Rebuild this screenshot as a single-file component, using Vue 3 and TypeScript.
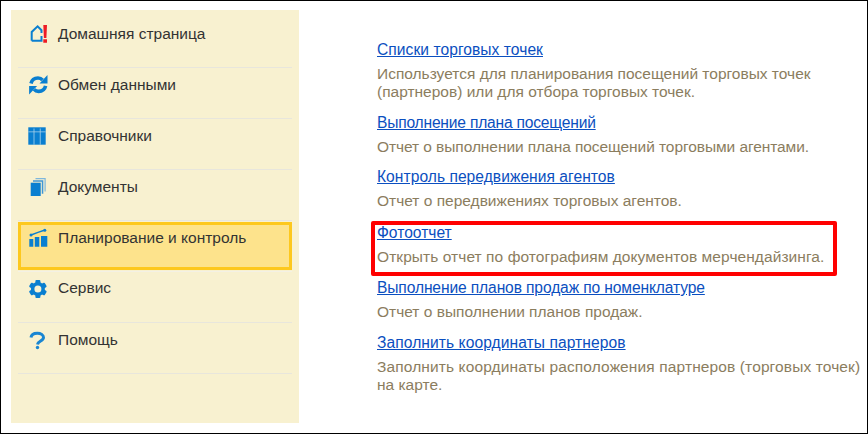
<script setup lang="ts">
interface Line { text: string; track?: number }
interface Entry { title: Line; lines: Line[]; highlighted?: boolean }
const menu = ['Домашняя страница', 'Обмен данными', 'Справочники', 'Документы', 'Планирование и контроль', 'Сервис', 'Помощь']
const entries: Entry[] = [
  { title: { text: 'Списки торговых точек', track: 0.05 }, lines: [{ text: 'Используется для планирования посещений торговых точек' }, { text: '(партнеров) или для отбора торговых точек.' }] },
  { title: { text: 'Выполнение плана посещений', track: -0.2 }, lines: [{ text: 'Отчет о выполнении плана посещений торговыми агентами.', track: -0.07 }] },
  { title: { text: 'Контроль передвижения агентов', track: 0.04 }, lines: [{ text: 'Отчет о передвижениях торговых агентов.' }] },
  { title: { text: 'Фотоотчет' }, lines: [{ text: 'Открыть отчет по фотографиям документов мерчендайзинга.', track: 0.07 }], highlighted: true },
  { title: { text: 'Выполнение планов продаж по номенклатуре', track: -0.12 }, lines: [{ text: 'Отчет о выполнении планов продаж.' }] },
  { title: { text: 'Заполнить координаты партнеров', track: 0.07 }, lines: [{ text: 'Заполнить координаты расположения партнеров (торговых точек)', track: 0.12 }, { text: 'на карте.' }] }
]
const spacing = (l: Line) => (l.track ? { letterSpacing: `${l.track}px` } : undefined)
</script>

<template>
  <div class="frame">
    <aside class="panel">
      <div v-for="(label, i) in menu" :key="label" class="row" :class="{ active: i === 4 }">
        <svg class="icon" width="22" height="24" viewBox="0 0 22 24">
          <g v-if="i === 0">
            <path d="M4.700 17.700V9L10.600 3.300 14.500 7.200V10M14.500 13V17.700H4.700" fill="none" stroke="#0a7fd0" stroke-width="2" />
            <path d="M16.300 2H20L19.400 15H16.900ZM16.300 16.300H20V19.700H16.300Z" fill="#ee1c25" />
          </g>
          <g v-else-if="i === 1">
            <path d="M4 8.500C4.800 5 7.500 3 11 3c2 0 3.500.8 4.500 2M18.600 10.900C17.800 14.400 15.100 16.400 11.600 16.400c-2 0-3.500-.8-4.500-2" fill="none" stroke="#0a7fd0" stroke-width="3.600" />
            <path d="M20.500 0V8.500H12.500ZM2.100 19.400V10.900H10.100Z" fill="#0a7fd0" />
          </g>
          <g v-else-if="i === 2">
            <path d="M1.300 1.300H18.700V18.700H1.300Z" fill="#0a7fd0" />
            <path d="M1.300 5.400H18.700V6.200H1.300ZM6.600 2.500H7.400V18.700H6.600ZM12.800 2.500H13.600V18.700H12.800Z" fill="#a9d2ea" />
          </g>
          <g v-else-if="i === 3">
            <path d="M8.500 1H18.700V14.500H17.500V2.200H8.500Z" fill="#7fb7dc" />
            <path d="M6 3.300H16.300V16.800H14.800V4.800H6Z" fill="#3f96d6" />
            <path d="M3.700 5.700H13.700V19H3.700Z" fill="#0a7fd0" />
          </g>
          <g v-else-if="i === 4">
            <path d="M2.300 11H6.300V18.700H2.300ZM7.800 9H12.300V18.700H7.800ZM14 8H20.300V18.700H14Z" fill="#0a7fd0" />
            <path d="M4 7L11 4.300 18 2" fill="none" stroke="#0a7fd0" stroke-width="1.400" />
            <circle cx="4" cy="7" r="1.500" fill="#0a7fd0" />
            <circle cx="17.800" cy="2.200" r="1.500" fill="#0a7fd0" />
          </g>
          <g v-else-if="i === 5" fill="#0a7fd0">
            <rect x="8.400" y="2" width="5" height="18" rx="1" />
            <rect x="8.400" y="2" width="5" height="18" rx="1" transform="rotate(60 10.900 11)" />
            <rect x="8.400" y="2" width="5" height="18" rx="1" transform="rotate(120 10.900 11)" />
            <circle cx="10.900" cy="11" r="7" />
            <circle cx="10.900" cy="11" r="3.500" fill="#f8f1d0" />
          </g>
          <g v-else>
            <path d="M4 8.500C4.300 5.500 7 4.200 10.300 4.200 13.800 4.200 16.500 6 16.500 8.500 16.500 12 11 12 10.500 15.500" fill="none" stroke="#1a86d2" stroke-width="3" />
            <circle cx="10.500" cy="18.500" r="1.700" fill="#1a86d2" />
          </g>
        </svg>
        <span class="label">{{ label }}</span>
      </div>
    </aside>
    <main class="content">
      <section v-for="e in entries" :key="e.title.text" class="entry" :class="{ marked: e.highlighted }">
        <a class="link" href="#" :style="spacing(e.title)">{{ e.title.text }}</a>
        <p v-for="l in e.lines" :key="l.text" class="desc" :style="spacing(l)">{{ l.text }}</p>
      </section>
    </main>
  </div>
</template>

<style>
html, body { margin: 0; background: #fff; }
</style>

<style scoped>
.frame {
  width: 868px;
  height: 434px;
  box-sizing: border-box;
  border: 1px solid #000;
  background: #fff;
  display: flex;
  align-items: flex-start;
  padding: 9px 0 0 10px;
  font-family: "Liberation Sans", Arial, sans-serif;
  overflow: hidden;
}
.panel {
  width: 288px;
  height: 413px;
  flex: none;
  box-sizing: border-box;
  background: #f8f1d0;
  padding: 7px 7px 0;
}
.row {
  height: 51px;
  box-sizing: border-box;
  border-bottom: 1px solid #e8e6dc;
  display: flex;
  align-items: flex-start;
  padding: 6px 0 0 9px;
  color: #333;
  font-size: 15.500px;
}
.row:first-child .icon, .row:last-child .icon { margin-top: 0; }
.row.active {
  height: 48px;
  margin-top: 1px;
  padding: 2px 0 0 6px;
  background: #fde38c;
  border: 3px solid #fdc81e;
}
.row.active + .row {
  margin-top: 1px;
  border-top: 1px solid #f4f1e4;
  height: 52px;
  padding-top: 5px;
}
.icon { flex: none; margin: 1px 9px 0 0; }
.label { line-height: 22px; }
.content {
  margin-left: 78px;
  padding-top: 31px;
  display: flex;
  flex-direction: column;
  gap: 12.500px;
  width: 490px;
  white-space: nowrap;
}
.entry { position: relative; }
.entry.marked { margin: 1px 0; }
.entry.marked::after {
  content: "";
  position: absolute;
  left: -6px;
  top: -2.500px;
  width: 466px;
  height: 55px;
  box-sizing: border-box;
  border: 4px solid #f00;
  border-radius: 2px;
}
.link { display: block; line-height: 18px; color: #0b4fc0; text-decoration: underline; font-size: 15.600px; }
.desc { margin: 0; line-height: 18px; color: #8b7d5e; font-size: 15.500px; }
.link + .desc { margin-top: 6px; }
</style>
